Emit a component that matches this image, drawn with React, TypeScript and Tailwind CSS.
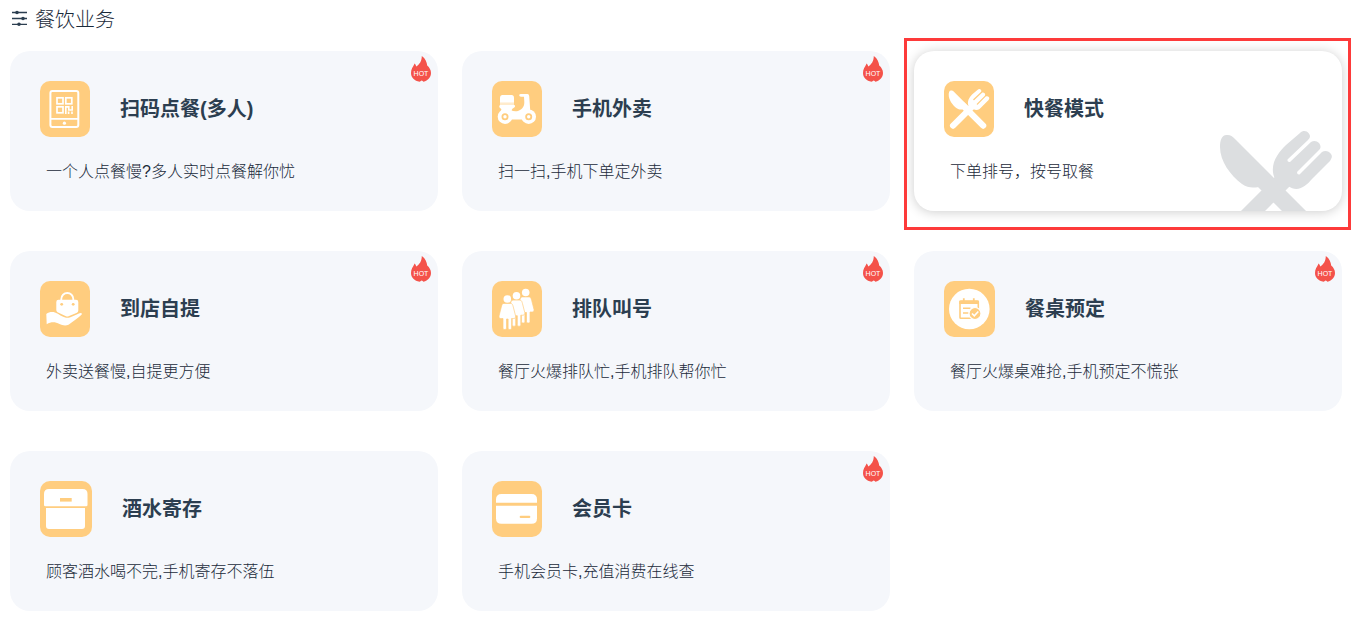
import type { ReactNode } from 'react';
import clsx from 'clsx';

type Service = {
  id: string;
  title: string;
  desc: string;
  icon: ReactNode;
  tileWidth: string;
  hot?: boolean;
  active?: boolean;
};

function UtensilsShape() {
  return (
    <>
      <path
        d="M68 45 12 101M38 44 95 101"
        fill="none"
        stroke="currentColor"
        strokeWidth="17"
        strokeLinecap="round"
      />
      <path d="M6.5 4C10 3.5 12 5 15 8L55 48L62 56L50 68L42 60C42 57 41 56 39 56C32 57 28 57 22 53C10 44 0 30 0 16C0 10 1.5 4 6.5 4Z" />
      <path d="M55 48C51 40 53 31 57 25C60 20 63 17 66 14L80 2C83-1 87 0 88.5 2C91 5 90 7 88 9L67.5 28.5Q67 31.5 70 31L91 11C94 9 97 10 99 12C101 15 101 17 99 19L77 41Q77 44 79.5 43.5L102 21C105 19 109 20 111 23C113 26 111 28 110 30L92 48C86 55 78 62 68 55L60 60Z" />
    </>
  );
}

function TabletIcon() {
  return (
    <svg viewBox="0 0 50 56" className="h-14 w-full" fill="none" stroke="white">
      <rect x="10.4" y="10" width="27.9" height="36" rx="2" strokeWidth="2" />
      <path d="M10 37.9H39" strokeWidth="1.6" />
      <circle cx="24.4" cy="42.2" r="1.6" fill="white" stroke="none" />
      <g strokeWidth="1.7">
        <rect x="17" y="16.8" width="6" height="6" />
        <rect x="25.8" y="16.8" width="6" height="6" />
        <rect x="17" y="25.8" width="6" height="6" />
      </g>
      <path d="M25.8 33V25.9H28.8V29H32.2V25M28.6 30.5V33M32 30.5V33" strokeWidth="1.6" />
    </svg>
  );
}

function ScooterIcon() {
  return (
    <svg viewBox="0 0 50 56" className="h-14 w-full" fill="white">
      <path d="M10.5 14H19.500Q22 14 22 17V21.7H8V17Q8 14 10.5 14Z" />
      <path d="M8 21.7H22V24H8Z" opacity="0.6" />
      <path d="M8 24H22Q23.3 24 23 25.5C22.500 27 20 27 19.700 29.5Q21 30.5 25 30.2C29.5 29 32.5 26 32.3 21L32 15.8H29Q27.2 15.7 27.2 14.3Q27.2 13 29 13H35.5Q37 13 37.2 15L38.2 29L37 38.5H13L8.5 30Q10.5 28 8 27Q6.5 25.5 8 24Z" />
      <circle cx="13" cy="35.7" r="7.3" />
      <circle cx="36.7" cy="35.7" r="7.3" />
      <g fill="none" stroke="#ffcd7f" strokeWidth="1.8">
        <circle cx="13" cy="35.7" r="2.6" />
        <circle cx="36.7" cy="35.7" r="2.6" />
      </g>
    </svg>
  );
}

function UtensilsIcon() {
  return (
    <svg viewBox="0 0 50 56" className="h-14 w-full text-white" fill="currentColor">
      <g transform="translate(4.7 8) scale(0.363)">
        <UtensilsShape />
      </g>
    </svg>
  );
}

function PickupIcon() {
  return (
    <svg viewBox="0 0 50 56" className="h-14 w-full" fill="white">
      <path d="M21.3 19V18A6 6 0 0 1 33.3 18V19" fill="none" stroke="white" strokeWidth="1.8" />
      <path d="M18.5 18.7H36Q38.3 18.7 38.3 21V29.5Q38.3 31 37 31.7L28.5 35.2Q27.3 35.7 26 35.2L17.5 31.2Q16.3 30.5 16.3 29V21Q16.3 18.7 18.5 18.7Z" />
      <circle cx="21.7" cy="23.3" r="1.4" fill="#ffcd7f" />
      <circle cx="33.2" cy="23.3" r="1.4" fill="#ffcd7f" />
      <path d="M6.3 33C9 31 12 30.6 15 31.5C19 33 22 36 26 36.7C31 37.3 36 33 40.5 31.9Q42.7 32 41.5 33.8C38 37 33 40.5 28.5 43.7C25.5 45.2 22 44.3 19.5 43C15 40.7 11 40.8 6.7 43.2Z" />
    </svg>
  );
}

const QUEUE = [
  { x: 33.7, y: 11.5 },
  { x: 24.5, y: 14.7 },
  { x: 15.3, y: 18 },
];

function QueueIcon() {
  return (
    <svg viewBox="0 0 50 56" className="h-14 w-full" fill="white">
      {QUEUE.map((p) => (
        <g key={p.x} transform={`translate(${p.x} ${p.y})`}>
          <path
            d="M-3.5 4.4H3.5C5 4.4 5.5 6 6 8L8.300 17C8.6 19.300 6.8 19.8 5.5 19.5H4.3V29C4.3 31 .8 31 .8 29V20H-.8V29C-.8 31-4.3 31-4.3 29V19.5H-5.5C-6.8 19.8-8.6 19.3-8.3 17L-6 8C-5.5 6-5 4.4-3.5 4.4Z"
            stroke="#ffcd7f"
            strokeWidth="0.7"
          />
          <circle r="3.8" />
        </g>
      ))}
    </svg>
  );
}

function BookingIcon() {
  return (
    <svg viewBox="0 0 51 56" className="h-14 w-full" fill="none" stroke="#ffcd7f">
      <circle cx="25.3" cy="28" r="20.3" fill="white" stroke="none" />
      <rect x="16" y="20" width="18.3" height="17.3" rx="0.8" strokeWidth="1.6" />
      <path d="M15.3 21.4H35" strokeWidth="3.2" />
      <path d="M19.8 17.2V22M29.800 17.2V22" strokeWidth="1.8" />
      <path d="M19 27.2H26.5M19 32H24.5" strokeWidth="1.6" />
      <circle cx="31" cy="32.5" r="6" fill="#ffcd7f" stroke="white" strokeWidth="1.2" />
      <path d="M28 32.5 30.3 34.8 34.3 30.5" stroke="white" strokeWidth="1.6" />
    </svg>
  );
}

function StorageIcon() {
  return (
    <svg viewBox="0 0 52 56" className="h-14 w-full" fill="white">
      <path d="M9 8H42.5Q47.5 8 47.5 13V24Q47.5 25.3 46 25.3H5.5Q4 25.3 4 24V13Q4 8 9 8Z" />
      <path d="M6 27H45V45Q45 48 42 48H9Q6 48 6 45Z" />
      <rect x="20" y="17" width="11.7" height="3.6" fill="#ffcd7f" />
    </svg>
  );
}

function CardIcon() {
  return (
    <svg viewBox="0 0 50 56" className="h-14 w-full" fill="white">
      <path d="M9.5 13H39.5Q45 13 45 18.5V21.7H4V18.5Q4 13 9.5 13Z" />
      <path d="M4 24.7H45V37.3Q45 42.8 39.5 42.8H9.5Q4 42.8 4 37.3Z" />
      <rect x="27.7" y="34.8" width="10.6" height="2.2" rx="1" fill="#ffcd7f" />
    </svg>
  );
}

function HotBadge() {
  return (
    <svg viewBox="0 0 20 26" className="absolute top-[5px] right-[7px] h-[26px] w-5">
      <path
        fill="#f4524a"
        d="M10.8 0C14.5 2.5 15.8 6 16.2 9.5C18.5 11.5 20 14 20 17C20 21 17 24.5 12.5 25.8C12 25.3 11.5 24.6 10.5 24.4C9.8 24.8 9.2 25.4 8.6 25.8C3.5 24.8 0 21.5 0 17C0 13 2 11 3.6 7.5C4.6 8.5 5 9.5 5.2 10.5C8.5 8.5 10.8 5 10.8 0Z"
      />
      <text
        x="10"
        y="20"
        textAnchor="middle"
        className="fill-white font-['Liberation_Sans'] text-[7px]"
      >
        HOT
      </text>
    </svg>
  );
}

const SERVICES: Service[] = [
  { id: 'scan', title: '扫码点餐(多人)', desc: '一个人点餐慢?多人实时点餐解你忧', icon: <TabletIcon />, tileWidth: 'w-[50px]', hot: true },
  { id: 'takeout', title: '手机外卖', desc: '扫一扫,手机下单定外卖', icon: <ScooterIcon />, tileWidth: 'w-[50px]', hot: true },
  { id: 'fast', title: '快餐模式', desc: '下单排号，按号取餐', icon: <UtensilsIcon />, tileWidth: 'w-[50px]', active: true },
  { id: 'pickup', title: '到店自提', desc: '外卖送餐慢,自提更方便', icon: <PickupIcon />, tileWidth: 'w-[50px]', hot: true },
  { id: 'queue', title: '排队叫号', desc: '餐厅火爆排队忙,手机排队帮你忙', icon: <QueueIcon />, tileWidth: 'w-[50px]', hot: true },
  { id: 'booking', title: '餐桌预定', desc: '餐厅火爆桌难抢,手机预定不慌张', icon: <BookingIcon />, tileWidth: 'w-[51px]', hot: true },
  { id: 'storage', title: '酒水寄存', desc: '顾客酒水喝不完,手机寄存不落伍', icon: <StorageIcon />, tileWidth: 'w-[52px]' },
  { id: 'member', title: '会员卡', desc: '手机会员卡,充值消费在线查', icon: <CardIcon />, tileWidth: 'w-[50px]', hot: true },
];

function ServiceCard({ service }: { service: Service }) {
  return (
    <li className="relative">
      <a
        href={`#${service.id}`}
        className={clsx(
          'relative block overflow-hidden rounded-[20px] px-[30px] pt-[30px] pb-[27px]',
          service.active ? 'bg-white shadow-[0_1px_12px_rgba(0,0,0,0.2)]' : 'bg-[#f5f7fb]'
        )}
      >
        <div className="flex items-center gap-[30px]">
          <span className={clsx('shrink-0 rounded-[10px] bg-[#ffcd7f]', service.tileWidth)}>
            {service.icon}
          </span>
          <h3 className="text-xl font-bold">{service.title}</h3>
        </div>
        <p className="mt-[23px] pl-1.5 text-base font-light text-[#1a2a3a]">{service.desc}</p>
        {service.hot && <HotBadge />}
        {service.active && (
          <svg
            viewBox="0 0 112 110"
            className="absolute top-20 right-2.5 h-[110px] w-28 text-[#dcdee0]"
            fill="currentColor"
          >
            <UtensilsShape />
          </svg>
        )}
      </a>
      {service.active && (
        <div className="pointer-events-none absolute -top-[13px] -right-[9px] -bottom-[19px] -left-2.5 border-3 border-[#fd3a3a]" />
      )}
    </li>
  );
}

export default function App() {
  return (
    <main className="bg-white pt-[5px] pr-4 pb-3 pl-2.5 font-['Liberation_Sans','Noto_Sans_CJK_SC',sans-serif] text-[#2c3e50]">
      <h2 className="mb-4 flex items-center gap-[5px] text-xl leading-[30px] font-light text-[#1a2a3a]">
        <svg viewBox="0 0 20 20" className="size-5" stroke="#2c3e50" fill="#2c3e50">
          <path d="M2 2.500H17M2 8.500H17M2 14.300H17" strokeWidth="1.3" />
          <g stroke="none">
            <circle cx="7" cy="2.5" r="1.8" />
            <circle cx="13" cy="8.5" r="1.8" />
            <circle cx="9" cy="14.3" r="1.8" />
          </g>
        </svg>
        餐饮业务
      </h2>
      <ul className="grid grid-cols-3 gap-x-6 gap-y-10">
        {SERVICES.map((service) => (
          <ServiceCard key={service.id} service={service} />
        ))}
      </ul>
    </main>
  );
}
